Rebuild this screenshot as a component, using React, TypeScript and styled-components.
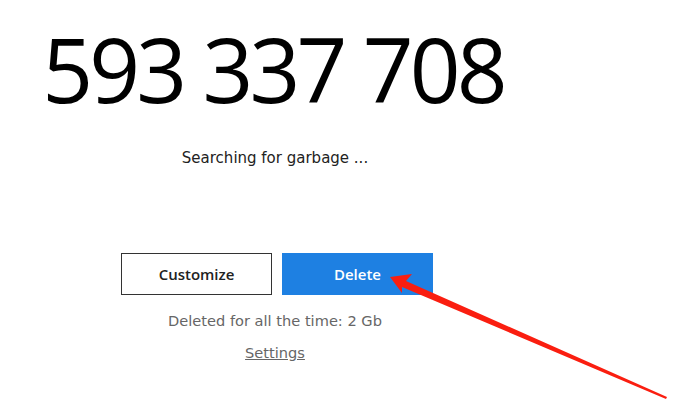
import React from "react";
import styled, { createGlobalStyle } from "styled-components";

const Global = createGlobalStyle`
  html, body { margin: 0; padding: 0; background: #ffffff; }
  body { width: 675px; height: 411px; overflow: hidden; }
`;

const Page = styled.div`
  position: relative;
  width: 675px;
  height: 411px;
  background: #fff;
`;

const Column = styled.div`
  width: 550px;
  display: flex;
  flex-direction: column;
  align-items: center;
  padding-top: 14px;
`;

const Counter = styled.div`
  font-family: "Open Sans", "Noto Sans", sans-serif;
  font-size: 89px;
  line-height: 110px;
  letter-spacing: -3.9px;
  color: #000;
  margin-left: -4px;
`;

const Status = styled.div`
  margin-top: 25px;
  font-family: "DejaVu Sans", Verdana, sans-serif;
  font-size: 15px;
  color: #222;
`;

const Buttons = styled.div`
  margin-top: 86px;
  display: flex;
  gap: 10px;
  margin-left: 4px;
`;

const Button = styled.button<{ $primary?: boolean }>`
  width: 151px;
  height: 42px;
  box-sizing: border-box;
  font-family: "Open Sans", sans-serif;
  font-weight: 600;
  font-size: 15px;
  cursor: pointer;
  border: 1px solid ${(p) => (p.$primary ? "#1e80e2" : "#333")};
  background: ${(p) => (p.$primary ? "#1e80e2" : "#fff")};
  color: ${(p) => (p.$primary ? "#fff" : "#222")};
  padding: 0;
`;

const Info = styled.div`
  margin-top: 17px;
  font-family: "DejaVu Sans", Verdana, sans-serif;
  font-size: 14.6px;
  color: #666;
`;

const SettingsLink = styled.a`
  margin-top: 15px;
  font-family: "DejaVu Sans", Verdana, sans-serif;
  font-size: 14.6px;
  color: #666;
  text-decoration: underline;
`;

const Arrow = styled.svg`
  position: absolute;
  left: 0;
  top: 0;
  pointer-events: none;
`;

export default function App() {
  return (
    <Page>
      <Global />
      <Column>
        <Counter>593 337 708</Counter>
        <Status>Searching for garbage ...</Status>
        <Buttons>
          <Button>Customize</Button>
          <Button $primary>Delete</Button>
        </Buttons>
        <Info>Deleted for all the time: 2 Gb</Info>
        <SettingsLink>Settings</SettingsLink>
      </Column>
      <Arrow width="675" height="411" viewBox="0 0 675 411">
        <polygon
          points="390,277 412,274 406,281 667,397 666,399 402,287 402,293"
          fill="#fa1e10"
        />
      </Arrow>
    </Page>
  );
}
